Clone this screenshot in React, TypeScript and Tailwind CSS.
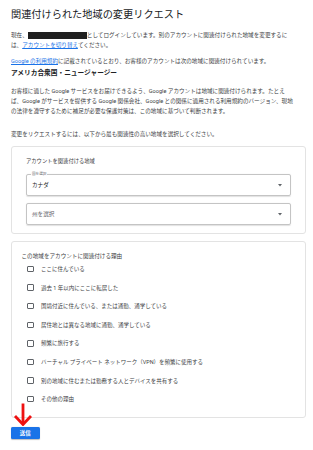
import React from "react";

const font = { fontFamily: '"Roboto","Noto Sans CJK JP",sans-serif' };

function Checkbox({ label }: { label: string }) {
  return (
    <div className="flex items-center h-[10px] leading-[10px]">
      <span className="ml-[5.5px] w-[6.5px] h-[6.5px] border-[1.2px] border-[#5f6368] rounded-[1px] shrink-0" />
      <span className="ml-[7.5px] text-[5.5px] text-[#3c4043] whitespace-nowrap">{label}</span>
    </div>
  );
}

function Caret() {
  return (
    <svg width="4" height="3" viewBox="0 0 4 3" className="shrink-0">
      <path d="M0 0 L4 0 L2 2.5 Z" fill="#5f6368" />
    </svg>
  );
}

export default function App() {
  const reasons = [
    "ここに住んでいる",
    "過去 1 年以内にここに転居した",
    "国境付近に住んでいる、または通勤、通学している",
    "居住地とは異なる地域に通勤、通学している",
    "頻繁に旅行する",
    "バーチャル プライベート ネットワーク（VPN）を頻繁に使用する",
    "別の地域に住むまたは勤務する人とデバイスを共有する",
    "その他の理由",
  ];
  return (
    <div
      className="relative w-[313px] h-[450px] bg-white pl-[11px] pr-[8px] pt-[8px] text-[#3c4043] overflow-hidden"
      style={font}
    >
      <h1 className="text-[10.2px] leading-[14px] text-[#202124] whitespace-nowrap">
        関連付けられた地域の変更リクエスト
      </h1>
      <p className="mt-[8px] text-[5.6px] leading-[10px]">
        <span className="whitespace-nowrap">
          現在、
          <span className="inline-block align-middle w-[59px] h-[7px] bg-[#1f1f1f]" />
          としてログインしています。別のアカウントに関連付けられた地域を変更するに
        </span>
        <br />
        は、
        <span className="text-[#1a73e8] underline">アカウントを切り替え</span>
        てください。
      </p>
      <p className="mt-[6px] text-[5.6px] leading-[10px] whitespace-nowrap">
        <span className="text-[#1a73e8] underline">Google の利用規約</span>
        に記載されているとおり、お客様のアカウントは次の地域に関連付けられています。
      </p>
      <p className="mt-[2px] text-[6.7px] leading-[10px] font-bold text-[#202124]">
        アメリカ合衆国・ニュージャージー
      </p>
      <p className="mt-[8px] text-[5.6px] leading-[10px] whitespace-nowrap">
        お客様に適した Google サービスをお届けできるよう、Google アカウントは地域に関連付けられます。たとえ
        <br />
        ば、Google がサービスを提供する Google 関係会社、Google との関係に適用される利用規約のバージョン、現地
        <br />
        の法律を遵守するために補足が必要な保護対策は、この地域に基づいて判断されます。
      </p>
      <p className="mt-[13px] text-[5.6px] leading-[10px] whitespace-nowrap">
        変更をリクエストするには、以下から最も関連性の高い地域を選択してください。
      </p>

      <div className="mt-[7px] w-[294.5px] border border-[#e3e3e3] rounded-[3px] pt-[9px] pb-[8px] pl-[14px] pr-[14px]">
        <div className="text-[5.3px] leading-[10px] text-[#3c4043]">アカウントを関連付ける地域</div>
        <div className="relative mt-[8px] h-[22px] border border-[#c4c4c4] rounded-[2px] flex items-center justify-between pl-[5px] pr-[8px] shadow-[0_0.5px_1px_rgba(0,0,0,0.12)]">
          <span className="absolute -top-[3px] left-[4px] px-[1px] bg-white text-[3.6px] leading-[5px] text-[#5f6368]">
            国を選択
          </span>
          <span className="text-[5.6px] text-[#202124]">カナダ</span>
          <Caret />
        </div>
        <div className="mt-[7px] h-[22px] border border-[#c4c4c4] rounded-[2px] flex items-center justify-between pl-[5px] pr-[8px] shadow-[0_0.5px_1px_rgba(0,0,0,0.12)]">
          <span className="text-[5.6px] text-[#5f6368]">州を選択</span>
          <Caret />
        </div>
      </div>

      <div className="mt-[7px] w-[294.5px] border border-[#e3e3e3] rounded-[3px] pt-[9px] pb-[13px] pl-[9.5px] pr-[10px]">
        <div className="text-[5.6px] leading-[10px] text-[#3c4043]">この地域をアカウントに関連付ける理由</div>
        <div className="mt-[3px] flex flex-col gap-[8.6px]">
          {reasons.map((r) => (
            <Checkbox key={r} label={r} />
          ))}
        </div>
      </div>

      <button className="mt-[9px] w-[28.5px] h-[12px] bg-[#1a73e8] rounded-[1.5px] text-white text-[5.4px] font-bold leading-[12px] text-center shadow-[0_0.5px_1px_rgba(0,0,0,0.25)]">
        送信
      </button>

      <svg
        className="absolute left-[13px] top-[403px]"
        width="20"
        height="23"
        viewBox="0 0 20 23"
      >
        <path d="M10 0.5 L10 21" stroke="#ee1111" strokeWidth="2.8" fill="none" />
        <path d="M2 13 L10 21.5 L18 13" stroke="#ee1111" strokeWidth="2.8" fill="none" strokeLinejoin="miter" />
      </svg>
    </div>
  );
}
